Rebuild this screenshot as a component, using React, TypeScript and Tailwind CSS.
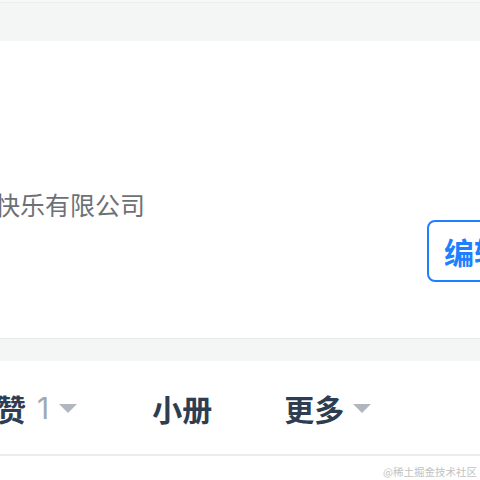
import React from 'react';

const Caret = ({ gap }: { gap: string }) => (
  <svg width="18" height="9" viewBox="0 0 18 9" className={gap}>
    <path d="M0 0 H18 L9 9 Z" fill="#b2b7bf" />
  </svg>
);

const App = () => {
  return (
    <div
      className="w-[480px] h-[480px] overflow-hidden bg-white"
      style={{ fontFamily: '"Noto Sans CJK SC", "Noto Sans", sans-serif' }}
    >
      <div className="h-[2px] bg-[#f7f8f8]" />
      <div className="h-[39px] bg-[#f4f5f5] border-t border-[#ececec]" />

      <div className="h-[298px] bg-white border-b border-[#e8e9eb]">
        <div className="pt-[148px] ml-[-5px] text-[25px] leading-[30px] text-[#6d7176] whitespace-nowrap">
          快乐有限公司
        </div>
        <div className="flex justify-end mt-[1px]">
          <button className="mr-[-60px] w-[113px] h-[62px] rounded-lg border-2 border-[#1e80ff] text-[#1e80ff] text-[30px] font-semibold pl-[15px] text-left">
            编辑
          </button>
        </div>
      </div>

      <div className="h-[22px] bg-[#f4f5f5]" />

      <div className="h-[95px] bg-white border-b-2 border-[#ececee] flex items-center whitespace-nowrap ml-[-4px] pt-[2px] text-[30px] font-semibold text-[#2e3d52]">
        <div className="flex items-center">
          <span>赞</span>
          <span className="ml-[11px] font-normal text-[#a2a8b0] font-['Inter',sans-serif]">1</span>
          <Caret gap="ml-[10px]" />
        </div>
        <div className="ml-[75px]">小册</div>
        <div className="ml-[72px] flex items-center">
          <span>更多</span>
          <Caret gap="ml-[9px]" />
        </div>
      </div>

      <div className="flex justify-end pr-[3px] pt-[8px] text-[10.5px] text-[#c2c2c2]">
        @稀土掘金技术社区
      </div>
    </div>
  );
};

export default App;
